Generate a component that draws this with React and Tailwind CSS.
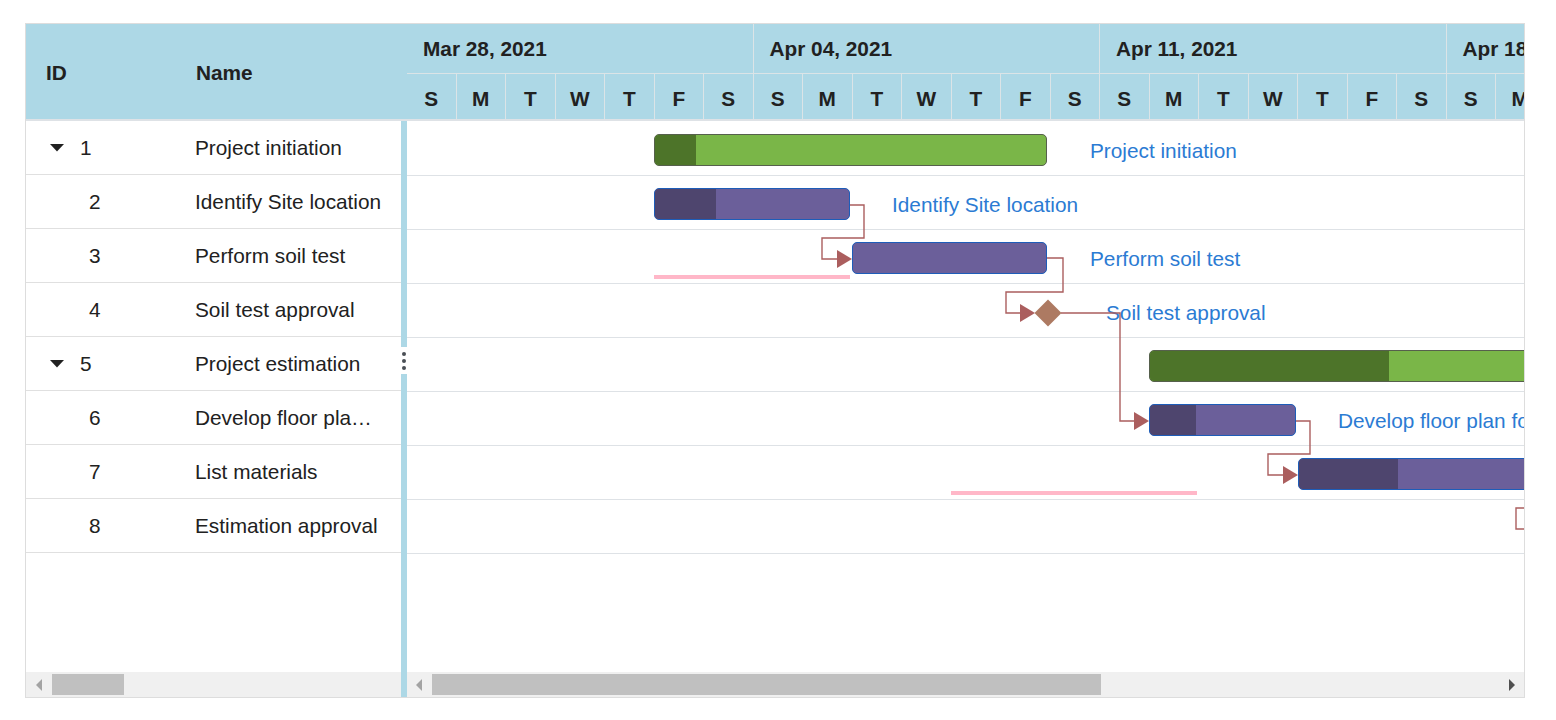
import React from "react";

const FONT = { fontFamily: '"Liberation Sans", Arial, sans-serif' };

const weeks = ["Mar 28, 2021", "Apr 04, 2021", "Apr 11, 2021", "Apr 18, 2021"];
const dayLetters = ["S", "M", "T", "W", "T", "F", "S"];

const gridRows = [
  { id: 1, name: "Project initiation", parent: true },
  { id: 2, name: "Identify Site location" },
  { id: 3, name: "Perform soil test" },
  { id: 4, name: "Soil test approval" },
  { id: 5, name: "Project estimation", parent: true },
  { id: 6, name: "Develop floor plan for estimation" },
  { id: 7, name: "List materials" },
  { id: 8, name: "Estimation approval" },
];

const chartRows = [
  { bar: { left: 247, width: 393, progress: 41, type: "parent" }, label: { left: 683, text: "Project initiation" } },
  { bar: { left: 247, width: 196, progress: 61, type: "child" }, label: { left: 485, text: "Identify Site location" } },
  { bar: { left: 445, width: 195, progress: 0, type: "child" }, baseline: { left: 247, width: 196 }, label: { left: 683, text: "Perform soil test" } },
  { label: { left: 699, text: "Soil test approval" } },
  { bar: { left: 742, width: 520, progress: 239, type: "parent" } },
  { bar: { left: 742, width: 147, progress: 46, type: "child" }, label: { left: 931, text: "Develop floor plan for estimation" } },
  { bar: { left: 891, width: 400, progress: 99, type: "child" }, baseline: { left: 544, width: 246 } },
  {},
];

function Bar({ bar }) {
  const parent = bar.type === "parent";
  return (
    <div
      className={
        "absolute top-[12px] h-[32px] rounded-[5px] border overflow-hidden " +
        (parent ? "bg-[#7ab648] border-[#56604c]" : "bg-[#6b5f9a] border-[#1d5db9]")
      }
      style={{ left: bar.left, width: bar.width }}
    >
      {bar.progress > 0 && (
        <div
          className={"h-full " + (parent ? "bg-[#4d7429]" : "bg-[#4e456e]")}
          style={{ width: bar.progress }}
        />
      )}
    </div>
  );
}

function ScrollArrow({ dir, color }) {
  return (
    <svg width="6" height="12" viewBox="0 0 6 12" className="shrink-0">
      {dir === "left" ? (
        <polygon points="6,0 6,12 0,6" fill={color} />
      ) : (
        <polygon points="0,0 0,12 6,6" fill={color} />
      )}
    </svg>
  );
}

export default function App() {
  return (
    <div className="w-[1556px] h-[720px] bg-white pt-[23px] pl-[25px]" style={FONT}>
      <div className="w-[1500px] h-[675px] border border-[#dddddd] flex flex-col overflow-hidden">
        {/* Header */}
        <div className="flex h-[97px] shrink-0 bg-[#add8e6] border-b-2 border-[#dee2e6] text-[#212121]">
          <div className="w-[381px] shrink-0 flex items-center font-bold text-[20.8px] pt-[2px]">
            <div className="w-[150px] pl-[20px]">ID</div>
            <div className="pl-[20px]">Name</div>
          </div>
          <div className="flex-1 min-w-0 overflow-hidden flex flex-col font-bold">
            <div className="h-[50px] shrink-0 flex border-b border-[#dbe4e7]">
              {weeks.map((w) => (
                <div
                  key={w}
                  className="w-[346.5px] shrink-0 border-r border-[#dbe4e7] pl-[16px] pt-[1px] flex items-center text-[20.8px] whitespace-nowrap"
                >
                  {w}
                </div>
              ))}
            </div>
            <div className="flex-1 flex">
              {weeks.flatMap((w, wi) =>
                dayLetters.map((d, di) => (
                  <div
                    key={wi + "-" + di}
                    className="w-[49.5px] shrink-0 border-r border-[#dbe4e7] flex items-center justify-center text-[20.8px] pt-[4px]"
                  >
                    {d}
                  </div>
                ))
              )}
            </div>
          </div>
        </div>

        {/* Body */}
        <div className="flex flex-1 min-h-0">
          {/* Left grid */}
          <div className="w-[375px] shrink-0 flex flex-col">
            <div className="flex-1 text-[20.8px] text-[#212121]">
              {gridRows.map((r) => (
                <div key={r.id} className="h-[54px] flex items-center border-b border-[#e0e0e0]">
                  <div className="w-[150px] shrink-0 flex items-center">
                    {r.parent ? (
                      <div className="flex items-center pl-[24px]">
                        <svg width="14" height="8" viewBox="0 0 14 8">
                          <polygon points="0,0 14,0 7,7.5" fill="#212121" />
                        </svg>
                        <span className="ml-[16px]">{r.id}</span>
                      </div>
                    ) : (
                      <span className="pl-[63px]">{r.id}</span>
                    )}
                  </div>
                  <div className="pl-[19px]">
                    <div className="w-[187px] truncate">{r.name}</div>
                  </div>
                </div>
              ))}
            </div>
            <div className="h-[25px] shrink-0 bg-[#f0f0f0] flex items-center pl-[10px]">
              <ScrollArrow dir="left" color="#a3a3a3" />
              <div className="ml-[10px] w-[72px] h-[21px] bg-[#c0c0c0]" />
            </div>
          </div>

          {/* Splitter */}
          <div className="w-[6px] shrink-0 flex flex-col">
            <div className="h-[226px] bg-[#add8e6]" />
            <div className="h-[27px] flex flex-col items-center justify-center gap-[3px]">
              <div className="w-[4px] h-[4px] rounded-full bg-[#4a4f55]" />
              <div className="w-[4px] h-[4px] rounded-full bg-[#4a4f55]" />
              <div className="w-[4px] h-[4px] rounded-full bg-[#4a4f55]" />
            </div>
            <div className="flex-1 bg-[#add8e6]" />
          </div>

          {/* Timeline */}
          <div className="flex-1 min-w-0 flex flex-col">
            <div className="flex-1 relative overflow-hidden">
              <div className="pt-[1px]">
                {chartRows.map((row, i) => (
                  <div key={i} className="h-[54px] relative border-b-[1.5px] border-[#dee2e6]">
                    {row.baseline && (
                      <div
                        className="absolute top-[45px] h-[4px] bg-[#ffb7c8]"
                        style={{ left: row.baseline.left, width: row.baseline.width }}
                      />
                    )}
                    {row.bar && <Bar bar={row.bar} />}
                    {row.label && (
                      <div
                        className="absolute top-[29px] -translate-y-1/2 text-[20.8px] text-[#2b7bd3] whitespace-nowrap"
                        style={{ left: row.label.left }}
                      >
                        {row.label.text}
                      </div>
                    )}
                  </div>
                ))}
              </div>
              <svg
                className="absolute left-0 top-0 pointer-events-none"
                width="1117"
                height="551"
                viewBox="0 0 1117 551"
              >
                <g fill="none" stroke="#ab5e5e" strokeWidth="1.4">
                  <path d="M443,84 H457 V117 H415 V138 H431" />
                  <path d="M640,137 H656 V171 H599 V192 H614" />
                  <path d="M654,192 H713 V300 H728" />
                  <path d="M889,300 H903 V333 H861 V354 H877" />
                  <path d="M1125,387 H1109 V408 H1125" />
                </g>
                <g fill="#ab5e5e">
                  <polygon points="430,129 445,138 430,147" />
                  <polygon points="613,183 628,192 613,201" />
                  <polygon points="727,291 742,300 727,309" />
                  <polygon points="876,345 891,354 876,363" />
                </g>
                <polygon points="641,178.5 654.5,192 641,205.5 627.5,192" fill="#ad7a62" />
              </svg>
            </div>
            <div className="h-[25px] shrink-0 bg-[#f0f0f0] flex items-center pl-[9px] pr-[9px]">
              <ScrollArrow dir="left" color="#a3a3a3" />
              <div className="ml-[10px] w-[669px] h-[21px] bg-[#c0c0c0]" />
              <div className="flex-1" />
              <ScrollArrow dir="right" color="#505050" />
            </div>
          </div>
        </div>
      </div>
    </div>
  );
}
